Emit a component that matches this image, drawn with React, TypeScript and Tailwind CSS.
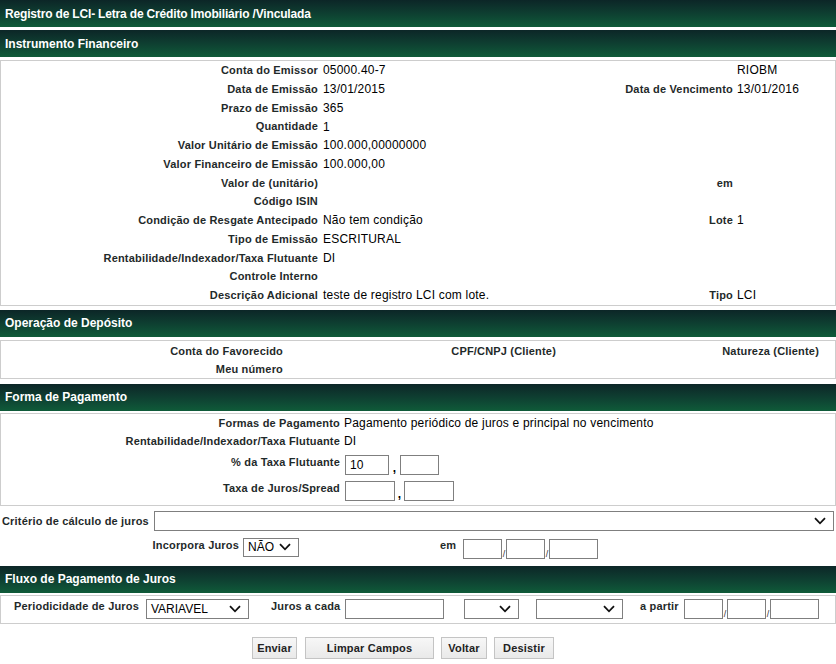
import type { ReactNode } from 'react';

const lbl = 'font-bold text-[11px] tracking-[0.18px] text-[#1f2a2a]';

function Bar({ title, className = '' }: { title: string; className?: string }) {
  return (
    <div
      className={`h-[27px] flex items-center pl-[5px] bg-gradient-to-b from-[#0c2627] via-[#0e3f31] to-[#0f5b39] text-white font-bold text-[12px] tracking-[-0.17px] ${className}`}
    >
      {title}
    </div>
  );
}

function Box({ children, className = '' }: { children: ReactNode; className?: string }) {
  return <div className={`border border-[#cdcdcd] ${className}`}>{children}</div>;
}

function Chevron() {
  return (
    <svg width="12" height="8" viewBox="0 0 12 8" className="shrink-0">
      <path d="M1 1.2 L6 6.3 L11 1.2" fill="none" stroke="#111" strokeWidth="1.8" />
    </svg>
  );
}

function Select({ w, value = '', h = 'h-[20px]' }: { w: string; value?: string; h?: string }) {
  return (
    <div className={`${w} ${h} border border-[#7f7f7f] bg-white flex items-center justify-between pl-[4px] pr-[7px] text-[12px] text-black shrink-0`}>
      <span>{value}</span>
      <Chevron />
    </div>
  );
}

function Input({ w, value = '' }: { w: string; value?: string }) {
  return (
    <div className={`${w} h-[20px] border border-[#7f7f7f] bg-white flex items-center pl-[4px] text-[12px] text-black shrink-0`}>
      {value}
    </div>
  );
}

function Slash() {
  return <span className="w-[4px] self-end text-[9px] leading-[10px] text-[#333] text-center">/</span>;
}

type Row = { l: string; v?: string; rl?: string; rv?: string };

const instrumento: Row[] = [
  { l: 'Conta do Emissor', v: '05000.40-7', rv: 'RIOBM' },
  { l: 'Data de Emissão', v: '13/01/2015', rl: 'Data de Vencimento', rv: '13/01/2016' },
  { l: 'Prazo de Emissão', v: '365' },
  { l: 'Quantidade', v: '1' },
  { l: 'Valor Unitário de Emissão', v: '100.000,00000000' },
  { l: 'Valor Financeiro de Emissão', v: '100.000,00' },
  { l: 'Valor de (unitário)', rl: 'em' },
  { l: 'Código ISIN' },
  { l: 'Condição de Resgate Antecipado', v: 'Não tem condição', rl: 'Lote', rv: '1' },
  { l: 'Tipo de Emissão', v: 'ESCRITURAL' },
  { l: 'Rentabilidade/Indexador/Taxa Flutuante', v: 'DI' },
  { l: 'Controle Interno' },
  { l: 'Descrição Adicional', v: 'teste de registro LCI com lote.', rl: 'Tipo', rv: 'LCI' },
];

function Btn({ label, w }: { label: string; w: string }) {
  return (
    <button className={`${w} h-[22px] border border-[#c4c4c4] bg-gradient-to-b from-[#f7f7f7] to-[#e9e9e9] text-[11px] font-bold tracking-[0.18px] text-[#222]`}>
      {label}
    </button>
  );
}

export default function App() {
  return (
    <div className="w-[836px] h-[664px] bg-white font-['Liberation_Sans',Arial,sans-serif] text-[12px] text-black overflow-hidden">
      <Bar title="Registro de LCI- Letra de Crédito Imobiliário /Vinculada" />
      <Bar title="Instrumento Financeiro" className="mt-[3px] tracking-[0px]" />

      <Box className="mt-[3px]">
        {instrumento.map((r, i) => (
          <div key={i} className="grid grid-cols-[317px_300px_115px_1fr] h-[18.75px] items-center">
            <span className={`${lbl} text-right`}>{r.l}</span>
            <span className="pl-[5px] tracking-[0.2px]">{r.v}</span>
            <span className={`${lbl} text-right`}>{r.rl}</span>
            <span className="pl-[4px] tracking-[0.2px]">{r.rv}</span>
          </div>
        ))}
      </Box>

      <Bar title="Operação de Depósito" className="mt-[4px] tracking-[0px]" />
      <Box className="mt-[3px] pt-[1px]">
        <div className="grid grid-cols-[282px_150px_123px_150px_113px_1fr] h-[18px] items-center">
          <span className={`${lbl} text-right`}>Conta do Favorecido</span>
          <span />
          <span className={`${lbl} text-right`}>CPF/CNPJ (Cliente)</span>
          <span />
          <span className={`${lbl} text-right`}>Natureza (Cliente)</span>
          <span />
        </div>
        <div className="grid grid-cols-[282px_1fr] h-[18px] items-center">
          <span className={`${lbl} text-right`}>Meu número</span>
          <span />
        </div>
      </Box>

      <Bar title="Forma de Pagamento" className="mt-[5px] tracking-[0px]" />
      <Box className="mt-[2px] pb-[4px]">
        <div className="flex h-[18px] items-center">
          <span className={`${lbl} w-[339px] text-right`}>Formas de Pagamento</span>
          <span className="pl-[4px] tracking-[0.2px]">Pagamento periódico de juros e principal no vencimento</span>
        </div>
        <div className="flex h-[18px] items-center">
          <span className={`${lbl} w-[339px] text-right`}>Rentabilidade/Indexador/Taxa Flutuante</span>
          <span className="pl-[4px]">DI</span>
        </div>
        <div className="flex items-start pt-[5px]">
          <span className={`${lbl} w-[339px] text-right leading-[14px]`}>% da Taxa Flutuante</span>
          <div className="flex ml-[5px]">
            <Input w="w-[44px]" value="10" />
            <span className="w-[11px] self-end text-center font-bold leading-[14px]">,</span>
            <Input w="w-[39px]" />
          </div>
        </div>
        <div className="flex items-start pt-[6px]">
          <span className={`${lbl} w-[339px] text-right leading-[14px]`}>Taxa de Juros/Spread</span>
          <div className="flex ml-[5px]">
            <Input w="w-[50px]" />
            <span className="w-[9px] self-end text-center font-bold leading-[14px]">,</span>
            <Input w="w-[50px]" />
          </div>
        </div>
      </Box>

      <div className="flex items-center mt-[5px] pl-[2px]">
        <span className={`${lbl} w-[147px] whitespace-nowrap`}>Critério de cálculo de juros</span>
        <div className="ml-[5px]">
          <Select w="w-[680px]" />
        </div>
      </div>

      <div className="flex items-start mt-[7px]">
        <span className={`${lbl} w-[239px] text-right leading-[14px]`}>Incorpora Juros</span>
        <div className="ml-[4px]">
          <Select w="w-[56px]" value="NÃO" h="h-[19px]" />
        </div>
        <span className={`${lbl} ml-[141px] w-[17px] leading-[14px]`}>em</span>
        <div className="flex ml-[6px] mt-[1px]">
          <Input w="w-[39px]" />
          <Slash />
          <Input w="w-[39px]" />
          <Slash />
          <Input w="w-[49px]" />
        </div>
      </div>

      <Bar title="Fluxo de Pagamento de Juros" className="mt-[7px] tracking-[0px]" />
      <Box className="mt-[2px] pt-[3px] pb-[4px]">
        <div className="flex items-start">
          <span className={`${lbl} ml-[13px] w-[127px] leading-[14px] whitespace-nowrap`}>Periodicidade de Juros</span>
          <div className="ml-[5px]">
            <Select w="w-[103px]" value="VARIAVEL" />
          </div>
          <span className={`${lbl} ml-[22px] w-[69px] leading-[14px] whitespace-nowrap`}>Juros a cada</span>
          <div className="ml-[5px]">
            <Input w="w-[99px]" />
          </div>
          <div className="ml-[20px]">
            <Select w="w-[55px]" />
          </div>
          <div className="ml-[17px]">
            <Select w="w-[87px]" />
          </div>
          <span className={`${lbl} ml-[17px] w-[38px] leading-[14px] whitespace-nowrap`}>a partir</span>
          <div className="flex ml-[6px]">
            <Input w="w-[39px]" />
            <Slash />
            <Input w="w-[39px]" />
            <Slash />
            <Input w="w-[49px]" />
          </div>
        </div>
      </Box>

      <div className="flex mt-[13px] pl-[252px]">
        <Btn label="Enviar" w="w-[45px]" />
        <div className="ml-[8px]">
          <Btn label="Limpar Campos" w="w-[129px]" />
        </div>
        <div className="ml-[7px]">
          <Btn label="Voltar" w="w-[46px]" />
        </div>
        <div className="ml-[7px]">
          <Btn label="Desistir" w="w-[60px]" />
        </div>
      </div>
    </div>
  );
}
